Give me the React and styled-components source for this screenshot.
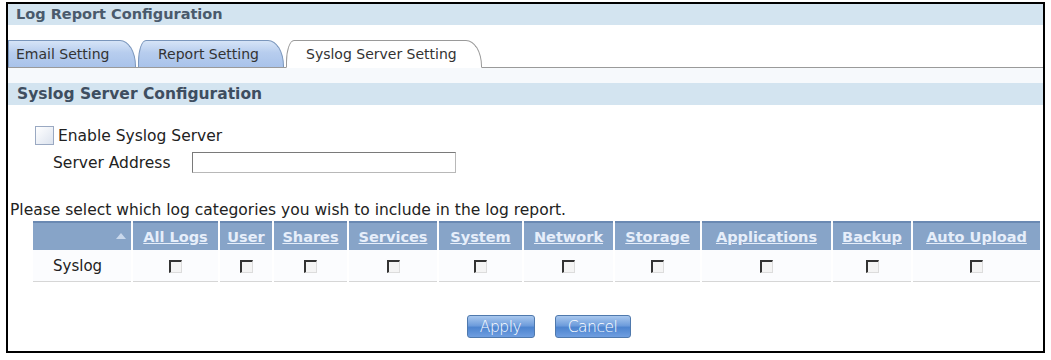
import React from "react";
import styled, { createGlobalStyle } from "styled-components";

const GlobalStyle = createGlobalStyle`
  html, body {
    margin: 0;
    padding: 0;
    background: #ffffff;
  }
  body {
    font-family: "DejaVu Sans", Verdana, sans-serif;
    color: #333;
  }
`;

const Frame = styled.div`
  box-sizing: border-box;
  margin: 2px 0 0 6px;
  width: 1039px;
  height: 351px;
  border: 2px solid #000;
  background: #fff;
  overflow: hidden;
`;

const TitleBar = styled.div`
  height: 21px;
  line-height: 21px;
  background: #d3e4f0;
  padding-left: 8px;
  font-size: 14.5px;
  font-weight: bold;
  color: #4a5a6c;
`;

const TabStrip = styled.div`
  margin-top: 15px;
  height: 28px;
  display: flex;
  align-items: flex-end;
  gap: 2px;
  border-bottom: 1px solid #9a9a9a;
  box-sizing: border-box;
`;

const Tab = styled.div`
  box-sizing: border-box;
  width: ${p => p.w}px;
  height: ${p => (p.active ? 28 : 27)}px;
  margin-bottom: ${p => (p.active ? -1 : 0)}px;
  padding-left: ${p => p.pad}px;
  display: flex;
  align-items: center;
  font-size: 14px;
  color: #333;
  border: 1px solid ${p => (p.active ? "#9a9a9a" : "#7a96bc")};
  border-bottom: ${p => (p.active ? "1px solid #fff" : "none")};
  border-radius: ${p => (p.first ? "0" : "8px")} 16px 0 0 / ${p => (p.first ? "0" : "22px")} 26px 0 0;
  background: ${p =>
    p.active ? "#fff" : "linear-gradient(to bottom, #d6e4f7 0%, #b7cdee 45%, #a9c3ea 100%)"};
`;

const PaleBand = styled.div`
  height: 15px;
  background: #f6f9fc;
`;

const SectionHeader = styled.div`
  height: 22px;
  line-height: 22px;
  background: #d3e4f0;
  padding-left: 9px;
  font-size: 15.5px;
  font-weight: bold;
  color: #3e4e60;
`;

const Body = styled.div`
  padding: 21px 0 0 2px;
`;

const CheckRow = styled.label`
  display: flex;
  align-items: center;
  gap: 4px;
  margin-left: 25px;
  font-size: 15.5px;
  color: #222;
`;

const BigBox = styled.span`
  box-sizing: border-box;
  width: 19px;
  height: 19px;
  border: 1px solid #9aa9c2;
  background: linear-gradient(to bottom right, #ffffff, #dce3ee);
`;

const AddressRow = styled.div`
  display: flex;
  align-items: center;
  margin: 7px 0 0 43px;
  font-size: 15.5px;
  color: #222;
`;

const AddressLabel = styled.span`
  width: 139px;
`;

const TextInput = styled.div`
  box-sizing: border-box;
  width: 264px;
  height: 21px;
  border: 1px solid #b8b8b8;
  border-top-color: #7a7a7a;
  border-left-color: #7a7a7a;
  background: #fff;
`;

const Hint = styled.div`
  margin-top: 28px;
  font-size: 15.5px;
  color: #222;
`;

const Table = styled.table`
  margin: 2px 0 0 21px;
  border-collapse: separate;
  border-spacing: 2px 0;
  table-layout: fixed;
  width: 1011px;
`;

const HeadCell = styled.th`
  height: 29px;
  padding: 0;
  background: #87a4c8;
  border-top: 2px solid #6a89b2;
  box-sizing: border-box;
  text-align: ${p => (p.corner ? "right" : "center")};
  font-size: 14.5px;
  font-weight: bold;
  color: #e6eefa;
  text-decoration: underline;
  white-space: nowrap;
`;

const SortMark = styled.span`
  display: inline-block;
  width: 0;
  height: 0;
  margin-right: 5px;
  vertical-align: 3px;
  border-left: 5px solid transparent;
  border-right: 5px solid transparent;
  border-bottom: 6px solid #c9d8ec;
`;

const Cell = styled.td`
  height: 31px;
  padding: 0 0 0 ${p => (p.label ? 20 : 0)}px;
  background: #fbfcfe;
  border-bottom: 1px solid #d6d6d6;
  text-align: ${p => (p.label ? "left" : "center")};
  font-size: 15px;
  color: #222;
`;

const OldBox = styled.span`
  display: inline-block;
  box-sizing: border-box;
  width: 13px;
  height: 13px;
  vertical-align: middle;
  border: 2px solid #333;
  border-right: 1px solid #dcdcdc;
  border-bottom: 1px solid #dcdcdc;
  background: #f4f4f4;
`;

const ButtonRow = styled.div`
  display: flex;
  justify-content: center;
  gap: 20px;
  margin-top: 33px;
  padding-left: 44px;
`;

const Button = styled.button`
  box-sizing: border-box;
  width: ${p => p.w}px;
  height: 23px;
  padding: 0;
  border: 1px solid #4f79ad;
  border-radius: 3px;
  background: linear-gradient(to bottom, #a9c8ee 0%, #6f9ddc 45%, #4d84cf 55%, #6f9ee0 100%);
  color: #fff;
  font-family: "DejaVu Sans", sans-serif;
  font-size: 15.5px;
  font-weight: 300;
  letter-spacing: -0.5px;
`;

const columns = [
  ["All Logs", 85],
  ["User", 52],
  ["Shares", 73],
  ["Services", 88],
  ["System", 83],
  ["Network", 89],
  ["Storage", 85],
  ["Applications", 129],
  ["Backup", 78],
  ["Auto Upload", 127]
];

export default function App() {
  return (
    <>
      <GlobalStyle />
      <Frame>
        <TitleBar>Log Report Configuration</TitleBar>
        <TabStrip>
          <Tab w={128} pad={7} first>Email Setting</Tab>
          <Tab w={146} pad={19}>Report Setting</Tab>
          <Tab w={196} pad={19} active>Syslog Server Setting</Tab>
        </TabStrip>
        <PaleBand />
        <SectionHeader>Syslog Server Configuration</SectionHeader>
        <Body>
          <CheckRow>
            <BigBox />
            Enable Syslog Server
          </CheckRow>
          <AddressRow>
            <AddressLabel>Server Address</AddressLabel>
            <TextInput />
          </AddressRow>
          <Hint>Please select which log categories you wish to include in the log report.</Hint>
          <Table>
            <colgroup>
              <col style={{ width: 98 }} />
              {columns.map(([name, w]) => (
                <col key={name} style={{ width: w }} />
              ))}
            </colgroup>
            <thead>
              <tr>
                <HeadCell corner>
                  <SortMark />
                </HeadCell>
                {columns.map(([name]) => (
                  <HeadCell key={name}>{name}</HeadCell>
                ))}
              </tr>
            </thead>
            <tbody>
              <tr>
                <Cell label="true">Syslog</Cell>
                {columns.map(([name]) => (
                  <Cell key={name}>
                    <OldBox />
                  </Cell>
                ))}
              </tr>
            </tbody>
          </Table>
          <ButtonRow>
            <Button w={68}>Apply</Button>
            <Button w={76}>Cancel</Button>
          </ButtonRow>
        </Body>
      </Frame>
    </>
  );
}
